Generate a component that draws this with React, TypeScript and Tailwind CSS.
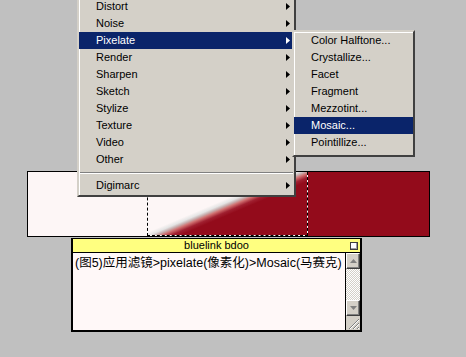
const mainItems = [
  "Distort",
  "Noise",
  "Pixelate",
  "Render",
  "Sharpen",
  "Sketch",
  "Stylize",
  "Texture",
  "Video",
  "Other",
];

const subItems = [
  "Color Halftone...",
  "Crystallize...",
  "Facet",
  "Fragment",
  "Mezzotint...",
  "Mosaic...",
  "Pointillize...",
];

const menuFont = { fontFamily: '"Liberation Sans", Arial, sans-serif' };

function Arrow({ active }: { active?: boolean }) {
  return (
    <svg width="4" height="7" viewBox="0 0 4 7" className="shrink-0">
      <path d="M0 0 L4 3.5 L0 7 Z" fill={active ? "#ffffff" : "#000000"} />
    </svg>
  );
}

function MenuRow({
  label,
  active,
  arrow,
}: {
  label: string;
  active?: boolean;
  arrow?: boolean;
}) {
  return (
    <div
      className={
        "h-[17px] flex items-center pl-[17px] pr-[4px] text-[11px] leading-none " +
        (active ? "bg-[#0a246a] text-white" : "text-black")
      }
    >
      <span className="flex-1">{label}</span>
      {arrow && <Arrow active={active} />}
    </div>
  );
}

function ScrollButton({ down }: { down?: boolean }) {
  return (
    <div className="h-[16px] bg-[#d4d0c8] border border-t-white border-l-white border-r-[#404040] border-b-[#404040] flex items-center justify-center shadow-[inset_-1px_-1px_0_#808080]">
      <svg width="7" height="4" viewBox="0 0 7 4">
        <path d={down ? "M0 0 L7 0 L3.5 4 Z" : "M0 4 L7 4 L3.5 0 Z"} fill="#808080" />
      </svg>
    </div>
  );
}

export default function App() {
  return (
    <div className="relative w-[466px] h-[357px] overflow-hidden bg-[#c0c0c0]">
      {/* canvas strip */}
      <div className="ml-[27px] mt-[171px] w-[403px] h-[66px] border border-black flex">
        <div className="w-[119px] bg-[#fdf6f6]" />
        <div className="w-[161px] bg-white border border-dashed border-black border-t-0 flex">
          <div className="flex-1 bg-[linear-gradient(157deg,#fdf6f6_46%,#e4e4e4_49%,#c8b0b0_51%,#d07070_53%,#a02030_56%,#930b1b_59%)]" />
        </div>
        <div className="flex-1 bg-[#930b1b]" />
      </div>

      {/* note window */}
      <div className="ml-[71px] mt-[1px] w-[291px] h-[94px] border-t border-l-2 border-r-2 border-b-2 border-black flex flex-col">
        <div
          className="h-[14px] bg-[#ffff80] border-b border-black flex items-center relative"
          style={menuFont}
        >
          <span className="flex-1 text-center text-[11px] leading-none text-black">
            bluelink bdoo
          </span>
          <div className="absolute right-[2px] top-[3px] w-[8px] h-[8px] border border-[#404040] bg-white shadow-[inset_-1px_-1px_0_#a0a0a0]" />
        </div>
        <div className="flex-1 flex">
          <div
            className="flex-1 bg-[#fff8f8] border-r border-black pl-[2px] pt-[2px] text-[12.5px] leading-[16px] text-black"
            style={{
              fontFamily: '"Liberation Sans", "Noto Sans CJK SC", sans-serif',
            }}
          >
            (图5)应用滤镜&gt;pixelate(像素化)&gt;Mosaic(马赛克)
          </div>
          <div className="w-[14px] flex flex-col">
            <ScrollButton />
            <div className="flex-1 bg-[repeating-conic-gradient(#ffffff_0_25%,#d4d0c8_0_50%)] bg-[length:2px_2px]" />
            <ScrollButton down />
            <div className="h-[14px] bg-[#d4d0c8] flex items-end justify-end">
              <svg width="12" height="12" viewBox="0 0 12 12">
                <path d="M11 1 L1 11 M11 5 L5 11 M11 9 L9 11" stroke="#808080" strokeWidth="1" />
                <path d="M11 2 L2 11 M11 6 L6 11 M11 10 L10 11" stroke="#ffffff" strokeWidth="1" />
              </svg>
            </div>
          </div>
        </div>
      </div>

      {/* main filter menu */}
      <div
        className="absolute left-[77px] top-[-6px] w-[219px] bg-[#d4d0c8] border-2 border-t-[#d4d0c8] border-l-[#d4d0c8] border-r-[#404040] border-b-[#404040] shadow-[inset_1px_1px_0_#ffffff] pt-[2px] pb-[1px]"
        style={menuFont}
      >
        {mainItems.map((item) => (
          <MenuRow key={item} label={item} arrow active={item === "Pixelate"} />
        ))}
        <div className="h-[9px] flex flex-col justify-center px-[1px]">
          <div className="h-px bg-[#808080]" />
          <div className="h-px bg-white" />
        </div>
        <MenuRow label="Digimarc" arrow />
      </div>

      {/* pixelate submenu */}
      <div
        className="absolute left-[292px] top-[30px] w-[123px] bg-[#d4d0c8] border-2 border-t-[#d4d0c8] border-l-[#d4d0c8] border-r-[#404040] border-b-[#404040] shadow-[inset_1px_1px_0_#ffffff] pb-[4px]"
        style={menuFont}
      >
        {subItems.map((item) => (
          <MenuRow key={item} label={item} active={item === "Mosaic..."} />
        ))}
      </div>
    </div>
  );
}
